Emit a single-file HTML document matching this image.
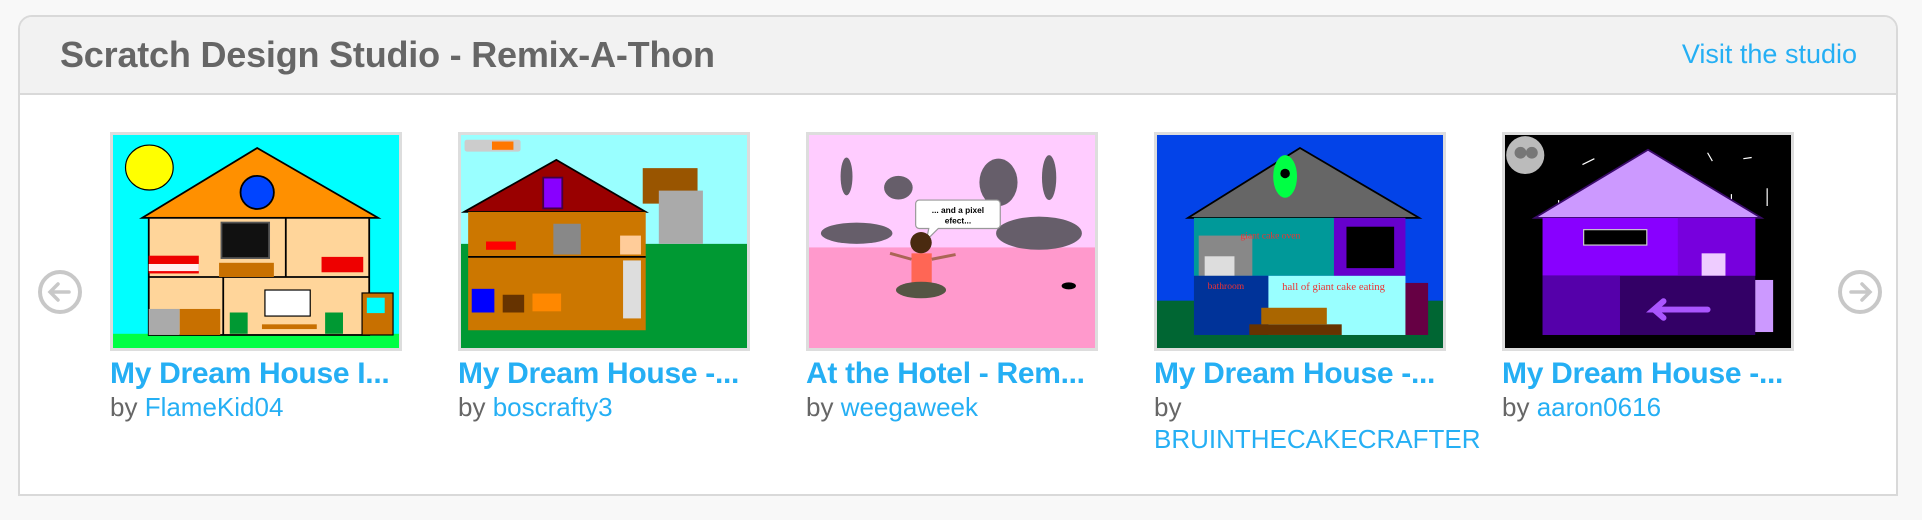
<!DOCTYPE html>
<html><head><meta charset="utf-8"><style>
html,body{margin:0;padding:0;background:#f8f8f8;width:1922px;height:520px;overflow:hidden;font-family:"Liberation Sans",Arial,sans-serif}
.box{position:absolute;left:18px;top:15px;width:1880px;height:481px;border:2px solid #d9d9d9;border-radius:14px 14px 0 0;background:#fff;box-sizing:border-box;overflow:hidden}
.hd{height:76px;background:#f2f2f2;border-bottom:2px solid #d9d9d9}
.hd h1{position:absolute;left:40px;top:17px;margin:0;font-size:36px;font-weight:bold;color:#666;letter-spacing:-0.2px}
.hd a{position:absolute;right:39px;top:22px;font-size:27px;color:#25aff4;text-decoration:none}
.card{position:absolute;top:132px;width:292px}
.th{width:292px;height:219px;border:3px solid #ddd;box-sizing:border-box;display:block;overflow:hidden}
.th svg{display:block;width:286px;height:213px}
.t{font-size:30px;font-weight:bold;color:#25aff4;margin-top:6px;white-space:nowrap;line-height:34px;letter-spacing:-0.3px}
.by{font-size:26px;color:#666;line-height:32px;white-space:nowrap}
.by span{color:#25aff4}
.arr{position:absolute;top:270px;width:44px;height:44px;border:4px solid #c8c8c8;border-radius:50%;box-sizing:border-box}
</style></head><body>
<div class="box">
<div class="hd"><h1>Scratch Design Studio - Remix-A-Thon</h1><a>Visit the studio</a></div>
</div>
<div class="arr" style="left:38px"><svg width="36" height="36" viewBox="0 0 36 36"><path d="M27 18H9M16 10l-8 8 8 8" stroke="#c8c8c8" stroke-width="3.5" fill="none" stroke-linecap="round"/></svg></div>
<div class="arr" style="left:1838px"><svg width="36" height="36" viewBox="0 0 36 36"><path d="M9 18h18M20 10l8 8-8 8" stroke="#c8c8c8" stroke-width="3.5" fill="none" stroke-linecap="round"/></svg></div>

<div class="card" style="left:110px">
<div class="th"><svg viewBox="0 0 480 360" preserveAspectRatio="none">
<rect width="480" height="360" fill="#0ff"/><rect y="336" width="480" height="24" fill="#00ff44"/>
<ellipse cx="61" cy="55" rx="40" ry="38" fill="#ff0" stroke="#000" stroke-width="2"/>
<polygon points="242,22 49,140 445,140" fill="#ff9000" stroke="#000" stroke-width="3"/>
<circle cx="242" cy="97" r="28" fill="#0044ff" stroke="#000" stroke-width="3"/>
<rect x="60" y="140" width="370" height="198" fill="#ffd59a" stroke="#000" stroke-width="3"/>
<line x1="60" y1="240" x2="430" y2="240" stroke="#000" stroke-width="3"/>
<line x1="290" y1="140" x2="290" y2="240" stroke="#000" stroke-width="3"/>
<line x1="185" y1="240" x2="185" y2="338" stroke="#000" stroke-width="3"/>
<rect x="182" y="148" width="80" height="60" fill="#111" stroke="#555" stroke-width="3"/>
<rect x="178" y="216" width="92" height="24" fill="#c87000"/>
<rect x="60" y="204" width="84" height="30" fill="#e00"/><rect x="60" y="218" width="84" height="12" fill="#fee"/>
<rect x="350" y="206" width="70" height="26" fill="#e00"/>
<rect x="60" y="294" width="52" height="44" fill="#aaa"/><rect x="112" y="294" width="68" height="44" fill="#c87000"/>
<rect x="255" y="262" width="76" height="44" fill="#fff" stroke="#000" stroke-width="2"/>
<rect x="250" y="320" width="92" height="8" fill="#c87000"/>
<rect x="196" y="300" width="30" height="36" fill="#093"/><rect x="356" y="300" width="30" height="36" fill="#093"/>
<rect x="418" y="267" width="52" height="71" fill="#c87000" stroke="#000" stroke-width="2"/><rect x="426" y="275" width="30" height="26" fill="#0ff"/>
</svg></div>
<div class="t">My Dream House I...</div><div class="by">by <span>FlameKid04</span></div></div>

<div class="card" style="left:458px">
<div class="th"><svg viewBox="0 0 480 360" preserveAspectRatio="none">
<rect width="480" height="360" fill="#9ff"/><rect y="184" width="480" height="176" fill="#093"/>
<rect x="6" y="8" width="94" height="20" rx="4" fill="#ccc"/><rect x="52" y="11" width="36" height="14" fill="#f70"/>
<rect x="305" y="56" width="92" height="60" fill="#950"/><rect x="332" y="94" width="74" height="90" fill="#aaa"/>
<polygon points="160,42 5,130 310,130" fill="#900" stroke="#000" stroke-width="3"/>
<rect x="138" y="72" width="32" height="52" fill="#80f" stroke="#404" stroke-width="3"/>
<rect x="12" y="130" width="298" height="200" fill="#c70"/>
<line x1="12" y1="206" x2="310" y2="206" stroke="#000" stroke-width="3"/>
<rect x="155" y="150" width="46" height="52" fill="#888"/>
<rect x="42" y="180" width="50" height="14" fill="#f00"/>
<rect x="267" y="170" width="35" height="32" fill="#fc9"/>
<rect x="272" y="212" width="30" height="98" fill="#ddd"/>
<rect x="18" y="260" width="38" height="40" fill="#00f"/><rect x="70" y="270" width="36" height="30" fill="#630"/>
<rect x="120" y="268" width="48" height="30" fill="#f80"/>
</svg></div>
<div class="t">My Dream House -...</div><div class="by">by <span>boscrafty3</span></div></div>

<div class="card" style="left:806px">
<div class="th"><svg viewBox="0 0 480 360" preserveAspectRatio="none">
<rect width="480" height="360" fill="#fcf"/><rect y="190" width="480" height="170" fill="#f9c"/>
<g fill="#665e6a"><ellipse cx="63" cy="70" rx="10" ry="32"/><ellipse cx="150" cy="89" rx="24" ry="20"/><ellipse cx="318" cy="80" rx="32" ry="40"/><ellipse cx="403" cy="72" rx="12" ry="38"/><ellipse cx="80" cy="166" rx="60" ry="18"/><ellipse cx="386" cy="166" rx="72" ry="28"/><ellipse cx="436" cy="255" rx="12" ry="6" fill="#000"/></g>
<path d="M185 110h130a6 6 0 0 1 6 6v36a6 6 0 0 1-6 6h-98l-20 20 4-20h-16a6 6 0 0 1-6-6v-36a6 6 0 0 1 6-6z" fill="#fff" stroke="#999" stroke-width="2"/>
<text x="250" y="132" font-size="14" font-weight="bold" text-anchor="middle" font-family="Liberation Sans,sans-serif">... and a pixel</text>
<text x="250" y="150" font-size="14" font-weight="bold" text-anchor="middle" font-family="Liberation Sans,sans-serif">efect...</text>
<circle cx="188" cy="182" r="18" fill="#4a2a10"/><rect x="172" y="200" width="34" height="50" fill="#f65"/>
<ellipse cx="188" cy="262" rx="42" ry="14" fill="#554"/>
<path d="M172 210l-36-10M206 210l40-8" stroke="#a65" stroke-width="5"/>
</svg></div>
<div class="t">At the Hotel - Rem...</div><div class="by">by <span>weegaweek</span></div></div>

<div class="card" style="left:1154px">
<div class="th"><svg viewBox="0 0 480 360" preserveAspectRatio="none">
<rect width="480" height="360" fill="#0343e8"/><rect y="280" width="480" height="80" fill="#063"/>
<polygon points="240,22 52,140 440,140" fill="#666" stroke="#000" stroke-width="3"/>
<ellipse cx="215" cy="70" rx="20" ry="36" fill="#0f4"/><circle cx="215" cy="65" r="8" fill="#000"/>
<rect x="62" y="140" width="235" height="98" fill="#099"/><rect x="297" y="140" width="120" height="98" fill="#60c"/>
<rect x="318" y="155" width="80" height="70" fill="#000"/>
<rect x="70" y="170" width="90" height="68" fill="#888"/><rect x="80" y="205" width="50" height="33" fill="#ddd"/>
<rect x="62" y="238" width="125" height="100" fill="#039"/><rect x="187" y="238" width="230" height="100" fill="#9ff"/>
<rect x="417" y="250" width="38" height="88" fill="#604"/>
<rect x="155" y="320" width="155" height="18" fill="#630"/><rect x="175" y="292" width="110" height="28" fill="#a60"/>
<text x="85" y="260" font-size="16" fill="#e33" font-family="Liberation Serif,serif">bathroom</text>
<text x="210" y="262" font-size="18" fill="#e33" font-family="Liberation Serif,serif">hall of giant cake eating</text>
<text x="140" y="175" font-size="16" fill="#e33" font-family="Liberation Serif,serif">giant cake oven</text>
</svg></div>
<div class="t">My Dream House -...</div><div class="by">by<br><span>BRUINTHECAKECRAFTER</span></div></div>

<div class="card" style="left:1502px">
<div class="th"><svg viewBox="0 0 480 360" preserveAspectRatio="none">
<rect width="480" height="360" fill="#000"/>
<circle cx="34" cy="34" r="32" fill="#bbb"/><circle cx="26" cy="30" r="10" fill="#777"/><circle cx="45" cy="30" r="10" fill="#777"/>
<g stroke="#fff" stroke-width="2"><path d="M130 50l20-10M260 40l-10 10M340 30l8 14M90 110v20M400 40l14-2M440 90v30M140 100l-6 10M380 100v14"/></g>
<polygon points="240,25 50,140 430,140" fill="#c9f" stroke="#3a0a6a" stroke-width="3"/>
<rect x="63" y="140" width="357" height="98" fill="#80f"/><rect x="290" y="140" width="130" height="98" fill="#70d"/>
<rect x="132" y="160" width="106" height="26" fill="#000" stroke="#ccc" stroke-width="2"/>
<rect x="330" y="200" width="40" height="38" fill="#ecf"/>
<rect x="63" y="238" width="357" height="100" fill="#306"/><rect x="63" y="238" width="130" height="100" fill="#50a"/>
<rect x="420" y="245" width="30" height="88" fill="#c9f"/>
<path d="M340 295h-90l16-14M250 295l16 14" stroke="#a5f" stroke-width="10" fill="none" stroke-linecap="round"/>
</svg></div>
<div class="t">My Dream House -...</div><div class="by">by <span>aaron0616</span></div></div>
</body></html>
